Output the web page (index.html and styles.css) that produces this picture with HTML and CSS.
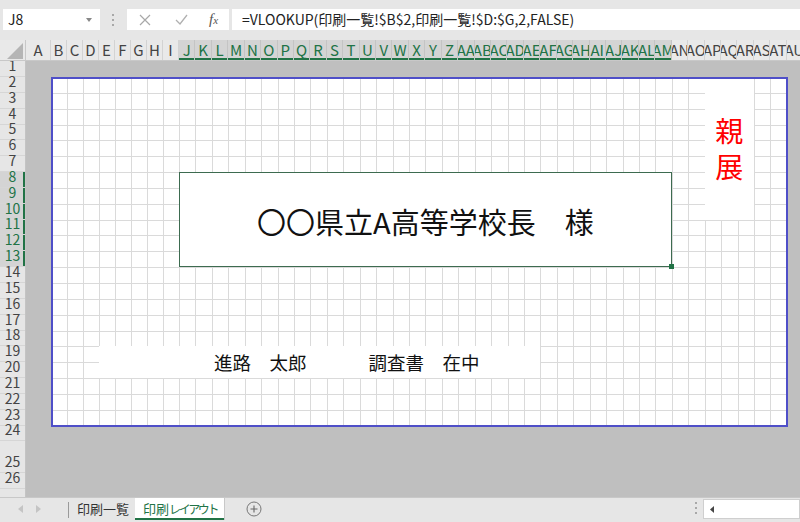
FILE: index.html
```html
<!DOCTYPE html>
<html lang="ja">
<head>
<meta charset="utf-8">
<title>印刷レイアウト</title>
<link rel="stylesheet" href="styles.css">
</head>
<body>
<div class="app">
  <div class="toolbar">
    <div class="namebox">
      <span>J8</span>
      <svg class="dd" width="6" height="4" viewBox="0 0 6 4"><path d="M0 0h6L3 4z" fill="#888"/></svg>
    </div>
    <div class="grip"><i></i><i></i><i></i></div>
    <div class="fxbox">
      <svg class="ico-x" width="12" height="12" viewBox="0 0 12 12"><path d="M1 1l10 10M11 1L1 11" stroke="#a8a8a8" stroke-width="1.2" fill="none"/></svg>
      <svg class="ico-ok" width="13" height="11" viewBox="0 0 13 11"><path d="M1 6l4 4L12 1" stroke="#b0b0b0" stroke-width="1.3" fill="none"/></svg>
      <span class="fx">f<span class="fxx">x</span></span>
    </div>
    <div class="formula">=VLOOKUP(印刷一覧!$B$2,印刷一覧!$D:$G,2,FALSE)</div>
  </div>

  <div class="colheads">
    <div class="corner"><div class="tri"></div></div>
    <div class="ch ca">A</div>
    <div class="ch">B</div><div class="ch">C</div><div class="ch">D</div><div class="ch">E</div>
    <div class="ch">F</div><div class="ch">G</div><div class="ch">H</div><div class="ch">I</div>
    <div class="ch w sel">J</div><div class="ch w sel">K</div><div class="ch w sel">L</div><div class="ch w sel">M</div>
    <div class="ch w sel">N</div><div class="ch w sel">O</div><div class="ch w sel">P</div><div class="ch w sel">Q</div>
    <div class="ch w sel">R</div><div class="ch w sel">S</div><div class="ch w sel">T</div><div class="ch w sel">U</div>
    <div class="ch w sel">V</div><div class="ch w sel">W</div><div class="ch w sel">X</div><div class="ch w sel">Y</div>
    <div class="ch w sel">Z</div><div class="ch w sel">AA</div><div class="ch w sel">AB</div><div class="ch w sel">AC</div>
    <div class="ch w sel">AD</div><div class="ch w sel">AE</div><div class="ch w sel">AF</div><div class="ch w sel">AG</div>
    <div class="ch w sel">AH</div><div class="ch w sel">AI</div><div class="ch w sel">AJ</div><div class="ch w sel">AK</div>
    <div class="ch w sel">AL</div><div class="ch w sel">AM</div>
    <div class="ch w">AN</div><div class="ch w">AO</div><div class="ch w">AP</div><div class="ch w">AQ</div>
    <div class="ch w">AR</div><div class="ch w">AS</div><div class="ch w">AT</div><div class="ch w">AU</div>
  </div>

  <div class="main">
    <div class="rowheads">
      <div class="rh r1">1</div>
      <div class="rh">2</div><div class="rh">3</div><div class="rh">4</div><div class="rh">5</div>
      <div class="rh">6</div><div class="rh">7</div>
      <div class="rh sel">8</div><div class="rh sel">9</div><div class="rh sel">10</div>
      <div class="rh sel">11</div><div class="rh sel">12</div><div class="rh sel">13</div>
      <div class="rh">14</div><div class="rh">15</div><div class="rh">16</div><div class="rh">17</div>
      <div class="rh">18</div><div class="rh">19</div><div class="rh">20</div><div class="rh">21</div>
      <div class="rh">22</div><div class="rh">23</div><div class="rh">24</div>
      <div class="rh r25">25</div>
      <div class="rh r1">26</div>
      <div class="rh r1"></div>
    </div>
    <div class="canvas">
      <div class="page">
        <div class="shin">親<br>展</div>
        <div class="addr">〇〇県立A高等学校長　様<span class="handle"></span></div>
        <div class="band"><span>進路　太郎</span><span class="b2">調査書　在中</span></div>
      </div>
    </div>
  </div>

  <div class="tabbar">
    <div class="nav">
      <svg width="5" height="8" viewBox="0 0 5 8"><path d="M5 0v8L0 4z" fill="#c4c4c4"/></svg>
      <svg width="5" height="8" viewBox="0 0 5 8"><path d="M0 0v8l5-4z" fill="#c4c4c4"/></svg>
    </div>
    <div class="vsep"></div>
    <div class="tab">印刷一覧</div>
    <div class="tab active">印刷<span class="kana">レイアウト</span></div>
    <div class="plus">
      <svg width="16" height="16" viewBox="0 0 16 16"><circle cx="8" cy="8" r="7" fill="none" stroke="#777" stroke-width="1"/><path d="M8 4.5v7M4.5 8h7" stroke="#666" stroke-width="1.1"/></svg>
    </div>
    <div class="spacer"></div>
    <div class="grip2"><i></i><i></i><i></i></div>
    <div class="hscroll">
      <svg width="4" height="7" viewBox="0 0 4 7"><path d="M4 0v7L0 3.5z" fill="#444"/></svg>
    </div>
  </div>
</div>
</body>
</html>
```
FILE: styles.css
```css
* { box-sizing: border-box; margin: 0; padding: 0; }
html, body { width: 800px; height: 522px; overflow: hidden; }
body {
  font-family: "Noto Sans CJK JP", "Noto Sans", sans-serif;
  background: #e6e6e6;
  color: #222;
}
.app { display: flex; flex-direction: column; width: 800px; height: 522px; }

/* ---------- formula toolbar ---------- */
.toolbar {
  flex: none;
  height: 40px;
  display: flex;
  align-items: flex-start;
  padding-top: 9px;
  background: #e6e6e6;
}
.namebox {
  margin-left: 3px;
  width: 97px;
  height: 21px;
  background: #fff;
  display: flex;
  align-items: center;
  justify-content: space-between;
  padding: 0 8px 0 5px;
  font-size: 14px;
  line-height: 21px;
  color: #222;
}
.grip {
  margin-left: 12px;
  height: 21px;
  display: flex;
  flex-direction: column;
  justify-content: center;
  gap: 3px;
}
.grip i, .grip2 i { display: block; width: 2px; height: 2px; background: #a8a8a8; }
.fxbox {
  margin-left: 13px;
  width: 102px;
  height: 21px;
  background: #fff;
  display: flex;
  align-items: center;
  padding-left: 12px;
}
.ico-ok { margin-left: 24px; }
.fx {
  margin-left: 21px;
  font-family: "Liberation Serif", "DejaVu Serif", serif;
  font-style: italic;
  font-size: 15px;
  color: #555;
  line-height: 21px;
}
.fxx { font-size: 11px; }
.formula {
  margin-left: 3px;
  flex: 1;
  height: 21px;
  background: #fff;
  padding-left: 10px;
  font-size: 14px;
  line-height: 21px;
  color: #222;
  white-space: nowrap;
}

/* ---------- column headers ---------- */
.colheads {
  flex: none;
  height: 21px;
  display: flex;
  overflow: hidden;
  background: #e9e9e9;
  border-bottom: 1px solid #c8c8c8;
}
.corner {
  flex: none;
  width: 26px;
  height: 20px;
  border-right: 1px solid #c8c8c8;
  display: flex;
  align-items: flex-end;
  justify-content: flex-end;
  padding: 0 2px 1px 0;
}
.tri {
  width: 16px;
  height: 16px;
  background: #b5b5b5;
  clip-path: polygon(100% 0, 100% 100%, 0 100%);
}
.ch {
  flex: none;
  width: 16px;
  height: 20px;
  display: flex;
  justify-content: center;
  overflow: hidden;
  border-right: 1px solid #d3d3d3;
  font-size: 15px;
  line-height: 20px;
  color: #444;
  white-space: nowrap;
}
.ch.ca { width: 25px; }
.ch.w { width: 16.43px; }
.ch.sel {
  background: #d4d4d4;
  color: #217346;
  border-right-color: #c4c4c4;
  box-shadow: inset 0 -2px 0 #217346;
}

/* ---------- main sheet area ---------- */
.main {
  flex: none;
  height: 436px;
  display: flex;
}
.rowheads {
  flex: none;
  width: 26px;
  height: 436px;
  overflow: hidden;
  background: #e6e6e6;
  border-right: 1px solid #c4c4c4;
}
.rh {
  height: 15.85px;
  display: flex;
  align-items: flex-end;
  justify-content: center;
  padding-bottom: 5px;
  border-bottom: 1px solid #d6d6d6;
  font-size: 14px;
  line-height: 11px;
  color: #444;
}
.rh.r1 { height: 16px; }
.rh.r25 { height: 31.5px; }
.rh.sel {
  background: #d4d4d4;
  color: #217346;
  box-shadow: inset -2px 0 0 #217346;
}
.canvas {
  flex: 1;
  background: #bfbfbf;
  padding: 16px 0 0 25px;
}
.page {
  position: relative;
  display: grid;
  grid-template-columns: repeat(8, 16px) repeat(37, 16.43px);
  grid-template-rows: repeat(22, 15.85px);
  width: 735.9px;
  height: 348.7px;
  background-color: #fff;
  background-image:
    repeating-linear-gradient(to right, #dadada 0 1px, transparent 1px 16px),
    repeating-linear-gradient(to right, #dadada 0 1px, transparent 1px 16.43px),
    repeating-linear-gradient(to bottom, #dadada 0 1px, transparent 1px 15.85px);
  background-size: 128px 100%, 608px 100%, 100% 100%;
  background-position: 0 0, 128px 0, 0 0;
  background-repeat: no-repeat;
}
.page::after {
  content: "";
  position: absolute;
  inset: 0 -1px -1px 0;
  border: 2px solid #4f4fc8;
  pointer-events: none;
}
.shin {
  grid-column: 41 / 44;
  grid-row: 1 / 10;
  background: #fff;
  display: flex;
  align-items: center;
  justify-content: center;
  text-align: center;
  color: #ff0000;
  font-size: 28px;
  line-height: 36px;
}
.addr {
  grid-column: 9 / 39;
  grid-row: 7 / 13;
  position: relative;
  background: #fff;
  border: 1px solid #3d6b50;
  display: flex;
  align-items: center;
  justify-content: center;
  padding-top: 2px;
  font-size: 29px;
  color: #111;
  white-space: nowrap;
}
.handle {
  position: absolute;
  right: -3px;
  bottom: -3px;
  width: 5px;
  height: 5px;
  background: #217346;
}
.band {
  grid-column: 4 / 31;
  grid-row: 18 / 20;
  background: #fff;
  display: flex;
  align-items: center;
  padding-left: 115px;
  font-size: 18.5px;
  color: #111;
  white-space: nowrap;
}
.b2 { margin-left: 62px; }

/* ---------- sheet tabs ---------- */
.tabbar {
  flex: 1;
  display: flex;
  align-items: flex-start;
  background: #e6e6e6;
  border-top: 1px solid #c8c8c8;
}
.nav {
  width: 68px;
  height: 22px;
  display: flex;
  align-items: center;
  gap: 13px;
  padding-left: 18px;
}
.vsep { width: 1px; height: 16px; margin-top: 4px; background: #9a9a9a; }
.tab {
  height: 22px;
  padding: 0 6px 0 8px;
  font-size: 13px;
  line-height: 22px;
  color: #333;
  white-space: nowrap;
}
.tab.active {
  padding: 0 7px 0 8px;
  background: #fff;
  color: #217346;
  border-right: 1px solid #c8c8c8;
  box-shadow: inset 0 -2px 0 #217346;
}
.kana { font-size: 12px; letter-spacing: -2.4px; }
.plus { margin-left: 21px; height: 22px; display: flex; align-items: center; }
.spacer { flex: 1; }
.grip2 {
  height: 20px;
  display: flex;
  flex-direction: column;
  justify-content: center;
  gap: 3px;
  margin-right: 6px;
}
.hscroll {
  width: 97px;
  height: 20px;
  margin-top: 1px;
  background: #fff;
  border: 1px solid #cfcfcf;
  display: flex;
  align-items: center;
  padding-left: 6px;
}
```
